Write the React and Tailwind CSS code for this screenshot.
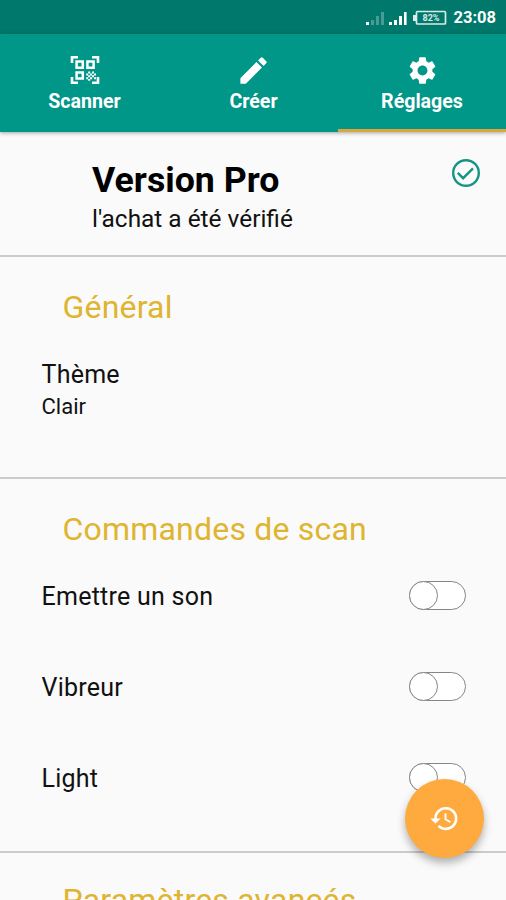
import React, { useState } from 'react';
import { MdEdit, MdHistory, MdSettings } from 'react-icons/md';
import clsx from 'clsx';

const QrIcon = () => (
  <svg className="h-[30px] w-[30px]" viewBox="0 0 30 30" fill="none" stroke="currentColor">
    <path d="M2 8V2.2H8M22 2.2h6V8M28 22v5.8H22M8 27.8H2V22" strokeWidth="2.6" />
    <path d="M6.6 6.6h6.2v6.2H6.6zM17.4 6.6h6.2v6.2h-6.2zM6.6 17.4h6.2v6.2H6.6z" strokeWidth="2.5" />
    <path
      d="M18.2 16.4h2v2h-2zM22 16.4h2v2h-2zM16.2 18.4h2v2h-2zM20.1 18.4h2v2h-2zM24 18.4h2v2h-2zM18.2 20.3h2v2h-2zM22 20.3h2v2h-2zM16.2 22.2h2v2h-2zM20.1 22.2h2v2h-2zM24 22.2h2v2h-2zM18.2 24.1h2v1.6h-2z"
      fill="currentColor"
      stroke="none"
    />
  </svg>
);

const CheckIcon = () => (
  <svg className="h-[30px] w-[30px] text-[#149585]" viewBox="0 0 30 30" fill="none" stroke="currentColor" strokeWidth="2.4">
    <circle cx="15" cy="15" r="12.8" />
    <path d="M6.8 14.8l5.3 5.4L22 10.4" />
  </svg>
);

const StatusBar = () => (
  <div className="flex h-[34px] items-center justify-end bg-[#00786b] pr-[10px] text-white">
    <svg className="mt-[3px] h-5 w-[82px]" viewBox="0 0 82 20" fill="currentColor">
      <path d="M0 13h3v3H0zM23 13h3v3h-3zM28 11h3v5h-3zM33 7h3v9h-3zM38 3h2.6v13H38z" />
      <path d="M5 11h3v5H5zM10 7h3v9h-3zM15 3h3v13h-3z" opacity="0.28" />
      <rect x="50.5" y="2.5" width="29" height="12.5" rx="1" fill="none" stroke="currentColor" strokeWidth="1.7" opacity="0.85" />
      <rect x="47" y="6" width="3" height="6" opacity="0.85" />
      <text x="65" y="12.2" textAnchor="middle" className="font-[Roboto] text-[9px] font-bold" opacity="0.85">82%</text>
    </svg>
    <span className="mt-[3px] ml-[5px] text-[16.5px] leading-none font-bold">23:08</span>
  </div>
);

const TABS = [
  { id: 'scan', label: 'Scanner', icon: <QrIcon /> },
  { id: 'create', label: 'Créer', icon: <MdEdit className="h-[35px] w-[35px]" /> },
  { id: 'settings', label: 'Réglages', icon: <MdSettings className="h-[33px] w-[33px]" /> },
];

const SectionTitle = ({ children }) => (
  <h2 className="pl-[62.5px] text-[32px] leading-[40px] tracking-[0.2px] text-[#dfb42f]">{children}</h2>
);

const Switch = ({ on, onClick }) => (
  <button
    onClick={onClick}
    className="flex h-[29px] w-[57px] items-center rounded-full border border-[#858585] bg-white"
  >
    <span
      className={clsx(
        '-my-px -ml-px h-[29px] w-[29px] rounded-full border border-[#858585] bg-white',
        on && 'translate-x-7'
      )}
    />
  </button>
);

const SwitchRow = ({ label, on, onClick }) => (
  <div className="flex h-[91px] items-center justify-between pr-10 pl-[41.5px]">
    <span className="pt-[2px] text-[25px] leading-[30px] tracking-[0.25px]">{label}</span>
    <Switch on={on} onClick={onClick} />
  </div>
);

export default function App() {
  const [active, setActive] = useState('settings');
  const [options, setOptions] = useState({ 'Emettre un son': false, Vibreur: false, Light: false });

  return (
    <div className="relative h-screen w-full overflow-hidden bg-[#fafafa] font-[Roboto,sans-serif] text-[#111]">
      <StatusBar />

      {/* Tabs */}
      <div className="grid h-[98px] grid-cols-[169px_169px_168px] bg-[#009688] text-white shadow-[0_1px_4px_rgba(0,0,0,0.35)]">
        {TABS.map((tab) => (
          <button
            key={tab.id}
            onClick={() => setActive(tab.id)}
            className={clsx(
              'flex flex-col items-center border-b-[3px] pt-[18px]',
              active === tab.id ? 'border-[#dda53d]' : 'border-transparent'
            )}
          >
            <span className="flex h-9 items-center">{tab.icon}</span>
            <span className="mt-[3px] text-[19.6px] leading-[21px] font-bold">{tab.label}</span>
          </button>
        ))}
      </div>

      {/* Pro version */}
      <div className="flex h-[125px] justify-between border-b-2 border-[#cbcbcb] pt-[26px] pr-[25px] pl-[92px]">
        <div>
          <h1 className="pt-px text-[35.7px] leading-[42px] font-bold text-black">Version Pro</h1>
          <p className="text-[24.4px] leading-[36px]">l'achat a été vérifié</p>
        </div>
        <CheckIcon />
      </div>

      {/* General */}
      <div className="h-[222px] border-b-2 border-[#cbcbcb] pt-[30px]">
        <SectionTitle>Général</SectionTitle>
        <div className="pt-[33px] pl-[41.5px]">
          <p className="text-[25px] leading-[30px] tracking-[0.25px]">Thème</p>
          <p className="text-[22px] leading-[34px]">Clair</p>
        </div>
      </div>

      {/* Scan controls */}
      <div className="h-[374px] border-b-2 border-[#cbcbcb] pt-[30px]">
        <SectionTitle>Commandes de scan</SectionTitle>
        <div className="pt-px">
          {Object.keys(options).map((label) => (
            <SwitchRow
              key={label}
              label={label}
              on={options[label]}
              onClick={() => setOptions({ ...options, [label]: !options[label] })}
            />
          ))}
        </div>
      </div>

      {/* Advanced */}
      <div className="pt-[27px]">
        <SectionTitle>Paramètres avancés</SectionTitle>
      </div>

      {/* History button */}
      <button className="absolute right-[22px] bottom-[42px] flex h-[79px] w-[79px] items-center justify-center rounded-full bg-[#ffaa3e] text-white shadow-[0_5px_9px_rgba(0,0,0,0.3)]">
        <MdHistory className="h-[31px] w-[31px]" />
      </button>
    </div>
  );
}
